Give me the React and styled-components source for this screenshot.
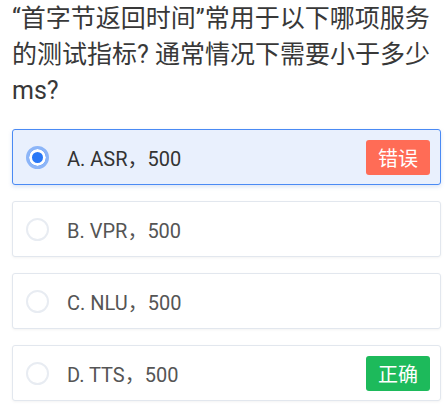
import React from 'react';
import styled, { createGlobalStyle } from 'styled-components';

const GlobalStyle = createGlobalStyle`
  html, body {
    margin: 0;
    padding: 0;
    background: #fff;
  }
  body {
    font-family: Roboto, "Noto Sans CJK SC", sans-serif;
  }
`;

const options = [
  { key: 'A', text: 'ASR，500', selected: true, badge: 'wrong' },
  { key: 'B', text: 'VPR，500' },
  { key: 'C', text: 'NLU，500' },
  { key: 'D', text: 'TTS，500', badge: 'right' },
];

export default function App() {
  return (
    <Page>
      <GlobalStyle />
      <Question>
        “首字节返回时间”常用于以下哪项服务的测试指标? 通常情况下需要小于多少ms?
      </Question>
      <OptionList>
        {options.map((o) => (
          <Option key={o.key} selected={o.selected}>
            <Radio selected={o.selected} />
            <Label selected={o.selected}>
              {o.key}. {o.text}
            </Label>
            {o.badge && (
              <Badge kind={o.badge}>{o.badge === 'right' ? '正确' : '错误'}</Badge>
            )}
          </Option>
        ))}
      </OptionList>
    </Page>
  );
}

const Page = styled.div`
  width: 445px;
  height: 406px;
  padding: 0 4px 0 12px;
  box-sizing: border-box;
  overflow: hidden;
`;

const Question = styled.div`
  font-size: 25px;
  line-height: 36px;
  color: #383838;
  padding-top: 1px;
  padding-right: 4px;
`;

const OptionList = styled.div`
  display: flex;
  flex-direction: column;
  gap: 16px;
  margin-top: 20px;
`;

const Option = styled.div`
  display: flex;
  align-items: center;
  height: 56px;
  width: 429px;
  box-sizing: border-box;
  padding: 0 10px 0 13px;
  border-radius: 3px;
  border: 1px solid ${(p) => (p.selected ? '#4a8af4' : '#e2e7ee')};
  background: ${(p) => (p.selected ? '#e9f0fd' : '#fff')};
  box-shadow: ${(p) =>
    p.selected ? '0 2px 4px rgba(60, 110, 200, 0.18)' : '0 1px 3px rgba(0, 0, 0, 0.05)'};
`;

const Radio = styled.span`
  width: 23px;
  height: 23px;
  box-sizing: border-box;
  border-radius: 50%;
  flex: none;
  border: ${(p) => (p.selected ? '3px solid #8cb5f8' : '2px solid #e8ecf2')};
  background: ${(p) => (p.selected ? '#2a78f6' : '#fff')};
  box-shadow: ${(p) => (p.selected ? 'inset 0 0 0 3px #fff' : 'none')};
`;

const Label = styled.span`
  flex: 1;
  margin-left: 18px;
  font-size: 20px;
  color: ${(p) => (p.selected ? '#333' : '#555')};
`;

const Badge = styled.span`
  width: 64px;
  height: 35px;
  border-radius: 3px;
  display: flex;
  align-items: center;
  justify-content: center;
  color: #fff;
  font-size: 20px;
  background: ${(p) => (p.kind === 'right' ? '#1dba5b' : '#ff6c56')};
`;
